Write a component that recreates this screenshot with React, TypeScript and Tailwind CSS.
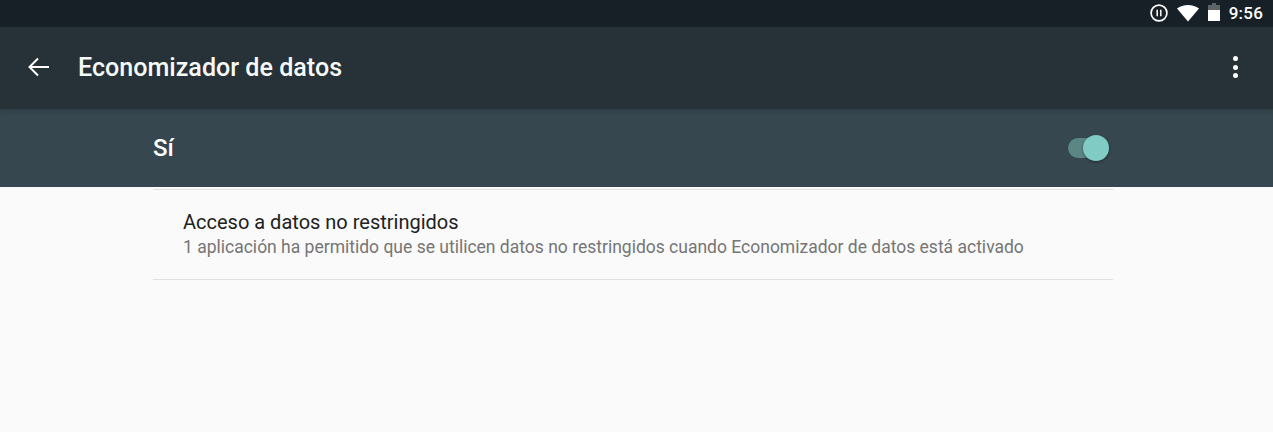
export default function App() {
  return (
    <div className="h-[432px] w-[1273px] overflow-hidden bg-[#fafafa] font-['Roboto',sans-serif]">
      {/* Status bar */}
      <div className="flex h-[27px] items-center justify-end bg-[#172026] pr-[10px] text-white">
        <svg width="18" height="18" viewBox="0 0 18 18" fill="none" stroke="white" className="mr-[8px] mb-[1px]">
          <circle cx="9" cy="9" r="7.9" strokeWidth="1.7" />
          <path d="M7.2 5.8v6.4M10.8 5.8v6.4" strokeWidth="1.5" />
        </svg>
        <svg width="24" height="18" viewBox="0 0 24 18" fill="white" className="mr-[7px] mb-[1px]">
          <path d="M1 4.5C4 2.2 8 1 12 1s8 1.2 11 3.5L12 17.5z" />
        </svg>
        <svg width="14" height="20" viewBox="0 0 14 20" className="mr-[8px] mb-[3px]">
          <path d="M5 1h4v2h4v16H1V3h4z" fill="white" fillOpacity="0.3" />
          <path d="M1 8h12v11H1z" fill="white" />
        </svg>
        <span className="mb-[1px] text-[17px] leading-none font-medium tracking-[0.2px]">9:56</span>
      </div>

      {/* Toolbar */}
      <div className="flex h-[82px] items-center bg-[#263238] pr-[34px] pl-[26px] text-white">
        <svg width="24" height="24" viewBox="0 0 24 24" fill="none" stroke="white" strokeWidth="2" className="mb-[3px]">
          <path d="M23 12H3M12 3.5 3.5 12l8.5 8.5" />
        </svg>
        <span className="ml-[28px] text-[25.1px] leading-none font-medium text-[#f7f9f9]">Economizador de datos</span>
        <div className="mb-[2px] ml-auto flex flex-col gap-[3.5px] pr-[1px]">
          <div className="size-[5px] rounded-full bg-white" />
          <div className="size-[5px] rounded-full bg-white" />
          <div className="size-[5px] rounded-full bg-white" />
        </div>
      </div>

      {/* Master switch row */}
      <div className="flex h-[78px] items-center bg-[#37474f] pr-[169px] pl-[153px] shadow-[inset_0_6px_6px_-5px_rgba(0,0,0,0.2)]">
        <span className="text-[24px] leading-none font-medium text-white">Sí</span>
        <div className="relative mb-[1px] ml-auto h-[20px] w-[36px]">
          <div className="h-full w-[32px] rounded-full bg-[#5a8784]" />
          <div className="absolute top-[-3px] right-[-5px] size-[26px] rounded-full bg-[#80cbc4] shadow-[0_1px_3px_rgba(0,0,0,0.4)]" />
        </div>
      </div>

      {/* List */}
      <div className="mx-[153px] mt-[2px] w-[960px] border-t border-[#e0e0e0]">
        <div className="flex h-[90px] flex-col border-b border-[#e0e0e0] pt-[20px] pl-[30px]">
          <span className="text-[20px] leading-[24px] text-[#212121]">Acceso a datos no restringidos</span>
          <span className="mt-[2px] text-[17.5px] leading-[22px] text-[#757575]">
            1 aplicación ha permitido que se utilicen datos no restringidos cuando Economizador de datos está activado
          </span>
        </div>
      </div>
    </div>
  );
}
